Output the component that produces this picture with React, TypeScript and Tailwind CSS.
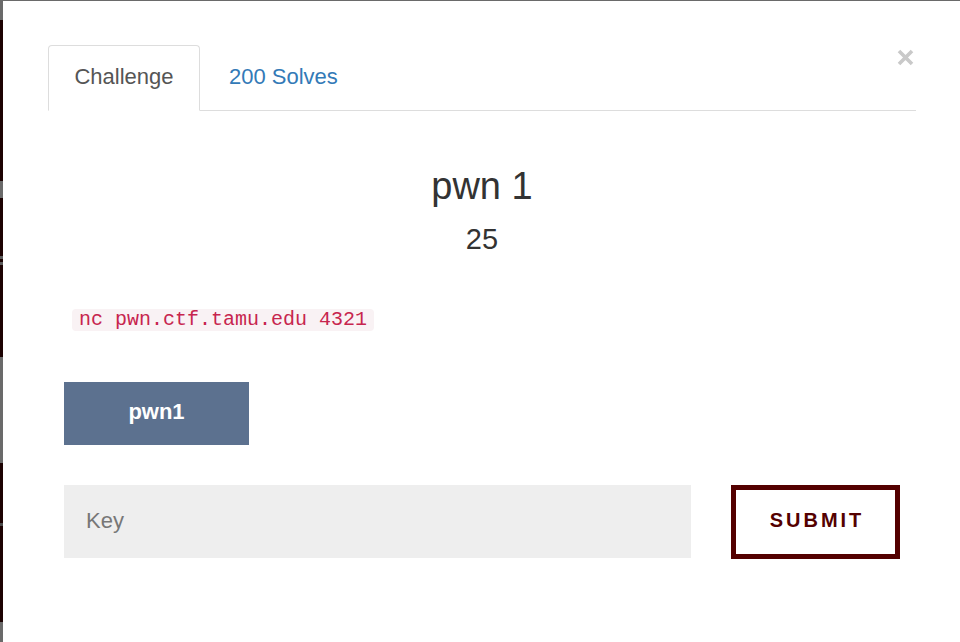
export default function App() {
    const font = { fontFamily: '"Liberation Sans", Arial, sans-serif' };

    return (
        <div className="flex h-[642px] w-[960px] overflow-hidden bg-white" style={font}>
            {/* backdrop sliver on the left */}
            <div className="flex w-[3px] shrink-0 flex-col">
                <div className="h-[20px] bg-[#6a6a6a]" />
                <div className="h-[161px] bg-[#1c0202]" />
                <div className="h-[17px] bg-[#6a6a6a]" />
                <div className="flex h-[159px] flex-col bg-[#1c0202]">
                    <div className="mt-[58px] h-[3px] bg-[#5a5a5a]" />
                    <div className="mt-[3px] h-[3px] bg-[#5a5a5a]" />
                </div>
                <div className="h-[106px] bg-[#6a6a6a]" />
                <div className="flex h-[159px] flex-col bg-[#1c0202]">
                    <div className="mt-[60px] h-[3px] bg-[#4a4a4a]" />
                </div>
                <div className="h-[20px] bg-[#6a6a6a]" />
            </div>

            <div className="relative flex flex-1 flex-col border-t border-[#6a6a6a]">
                <button className="absolute left-[894px] top-[48px] text-[#c9c9c9]" aria-label="Close">
                    <svg width="17" height="17" viewBox="0 0 17 17">
                        <path d="M2 2 L15 15 M15 2 L2 15" stroke="currentColor" strokeWidth="3.6" />
                    </svg>
                </button>

                <div className="pl-[45px] pr-[44px] pt-[44px]">
                    <ul className="flex h-[66px] border-b border-[#dddddd]">
                        <li className="-mb-px flex h-[66px] w-[152px] items-center justify-center rounded-t-[4px] border border-[#dddddd] border-b-white bg-white pb-[4px] text-[22px] text-[#555555]">
                            Challenge
                        </li>
                        <li className="ml-[2px] flex h-[65px] items-center px-[27px] pb-[2px] text-[22px] text-[#337ab7]">
                            200 Solves
                        </li>
                    </ul>
                </div>

                <div className="flex flex-col pl-[61px] pr-[60px]">
                    <h3 className="mt-[55px] text-center text-[38px] leading-[40px] text-[#333333]">pwn 1</h3>
                    <p className="mt-[17px] text-center text-[29px] leading-[32px] text-[#333333]">25</p>

                    <div className="mt-[54px] flex">
                        <code
                            className="ml-[8px] rounded-[4px] bg-[#f9f2f4] px-[7px] text-[20px] leading-[22px] text-[#c7254e]"
                            style={{ fontFamily: '"Liberation Mono", "Courier New", monospace' }}
                        >
                            nc pwn.ctf.tamu.edu 4321
                        </code>
                    </div>

                    <div className="mt-[51px] flex">
                        <button className="flex h-[63px] w-[185px] items-center justify-center bg-[#5c718f] pb-[5px] text-[22px] font-bold text-white">
                            pwn1
                        </button>
                    </div>

                    <div className="mt-[40px] flex items-start justify-between">
                        <div className="flex h-[73px] w-[627px] items-center bg-[#eeeeee] pb-[2px] pl-[22px] text-[22px] text-[#777777]">
                            Key
                        </div>
                        <button className="flex h-[74px] w-[169px] items-center justify-center border-[5px] border-[#540000] bg-white pb-[4px] pl-[3px] text-[20px] font-bold tracking-[3px] text-[#540000]">
                            SUBMIT
                        </button>
                    </div>
                </div>
            </div>
        </div>
    );
}
